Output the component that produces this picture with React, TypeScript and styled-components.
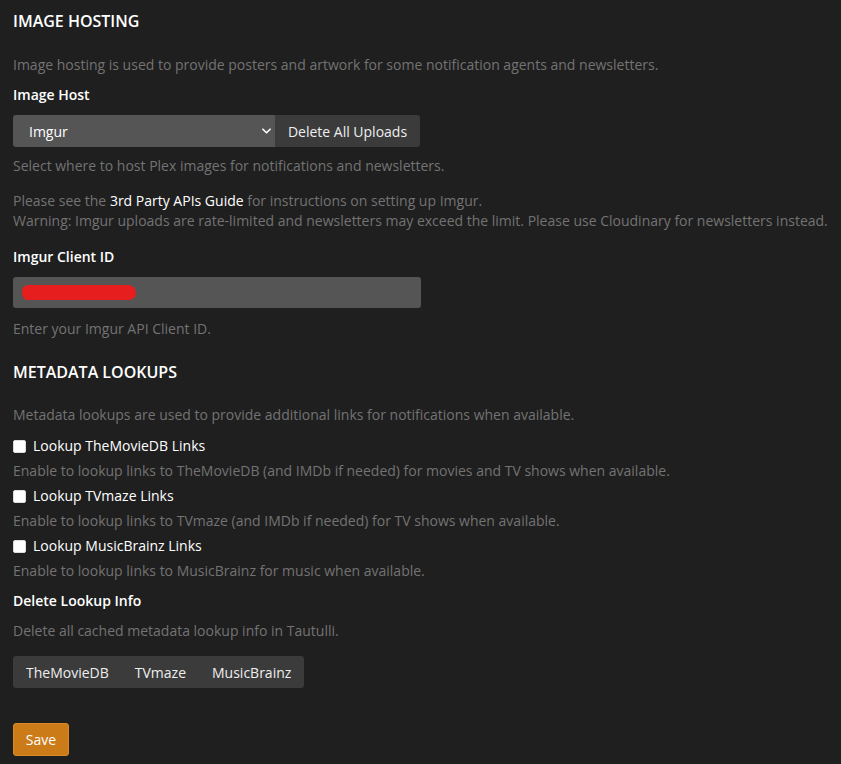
import React from 'react';
import styled, { createGlobalStyle } from 'styled-components';

const colors = {
  bg: '#1f1f1f',
  text: '#eeeeee',
  muted: '#737373',
  field: '#555555',
  button: '#3b3b3b',
  orange: '#cc7b19',
  orangeBorder: '#d98a26',
  redact: '#e61e1e',
};

const GlobalStyle = createGlobalStyle`
  html, body {
    margin: 0;
    padding: 0;
    background: ${colors.bg};
  }
  body {
    font-family: 'Open Sans', 'Noto Sans', sans-serif;
    font-size: 14px;
    line-height: 20px;
    color: ${colors.text};
  }
  * {
    box-sizing: border-box;
  }
`;

const lookups = [
  {
    name: 'TheMovieDB',
    help: 'Enable to lookup links to TheMovieDB (and IMDb if needed) for movies and TV shows when available.',
  },
  {
    name: 'TVmaze',
    help: 'Enable to lookup links to TVmaze (and IMDb if needed) for TV shows when available.',
  },
  {
    name: 'MusicBrainz',
    help: 'Enable to lookup links to MusicBrainz for music when available.',
  },
];

export default function App() {
  return (
    <>
      <GlobalStyle />
      <Page>
        <SectionHeader>Image Hosting</SectionHeader>
        <Intro>Image hosting is used to provide posters and artwork for some notification agents and newsletters.</Intro>

        <Label>Image Host</Label>
        <InputRow>
          <SelectWrap>
            <Select defaultValue="imgur">
              <option value="imgur">Imgur</option>
              <option value="cloudinary">Cloudinary</option>
            </Select>
            <Chevron viewBox="0 0 10 6" aria-hidden>
              <path d="M1 1l4 4 4-4" fill="none" stroke="#fff" strokeWidth="1.8" strokeLinecap="round" strokeLinejoin="round" />
            </Chevron>
          </SelectWrap>
          <AddonButton>Delete All Uploads</AddonButton>
        </InputRow>
        <HelpText $gap={9}>Select where to host Plex images for notifications and newsletters.</HelpText>
        <HelpText $gap={15}>
          Please see the <GuideLink href="#">3rd Party APIs Guide</GuideLink> for instructions on setting up Imgur.
          <br />
          Warning: Imgur uploads are rate-limited and newsletters may exceed the limit. Please use Cloudinary for
          newsletters instead.
        </HelpText>

        <Label $gap={16}>Imgur Client ID</Label>
        <TextField>
          <Redaction />
        </TextField>
        <HelpText $gap={11}>Enter your Imgur API Client ID.</HelpText>

        <SectionHeader $gap={22}>Metadata Lookups</SectionHeader>
        <Intro $gap={22}>Metadata lookups are used to provide additional links for notifications when available.</Intro>

        <LookupList>
          {lookups.map((l) => (
            <div key={l.name}>
              <CheckLabel>
                <Checkbox type="checkbox" />
                Lookup {l.name} Links
              </CheckLabel>
              <CheckHelp>{l.help}</CheckHelp>
            </div>
          ))}
        </LookupList>

        <Label>Delete Lookup Info</Label>
        <HelpText>Delete all cached metadata lookup info in Tautulli.</HelpText>
        <ButtonGroup>
          {lookups.map((l) => (
            <GroupButton key={l.name}>{l.name}</GroupButton>
          ))}
        </ButtonGroup>

        <SaveButton>Save</SaveButton>
      </Page>
    </>
  );
}

const Page = styled.div`
  display: flex;
  flex-direction: column;
  align-items: flex-start;
  padding: 10px 13px 8px;
`;

const SectionHeader = styled.h3<{ $gap?: number }>`
  margin: ${(p) => p.$gap ?? 0}px 0 0;
  font-size: 16px;
  line-height: 22px;
  font-weight: 600;
  text-transform: uppercase;
  color: #ffffff;
`;

const Intro = styled.p<{ $gap?: number }>`
  margin: ${(p) => p.$gap ?? 23}px 0 0;
  color: ${colors.muted};
`;

const Label = styled.label<{ $gap?: number }>`
  display: block;
  margin-top: ${(p) => p.$gap ?? 10}px;
  font-weight: 600;
  color: #ffffff;
`;

const InputRow = styled.div`
  display: flex;
  margin-top: 10px;
  height: 32px;
`;

const SelectWrap = styled.div`
  position: relative;
  width: 262px;
  height: 100%;
`;

const Select = styled.select`
  appearance: none;
  width: 100%;
  height: 100%;
  border: none;
  border-radius: 3px 0 0 3px;
  background: ${colors.field};
  color: #ffffff;
  font-family: inherit;
  font-size: 14px;
  font-weight: 400;
  padding: 0 16px;
  outline: none;
`;

const Chevron = styled.svg`
  position: absolute;
  right: 4px;
  top: 13px;
  width: 9px;
  height: 6px;
  pointer-events: none;
`;

const AddonButton = styled.button`
  height: 100%;
  width: 145px;
  border: none;
  border-radius: 0 3px 3px 0;
  background: ${colors.button};
  color: ${colors.text};
  font-family: inherit;
  font-size: 14px;
  font-weight: 400;
  white-space: nowrap;
  padding: 0 12px;
`;

const HelpText = styled.p<{ $gap?: number }>`
  margin: ${(p) => p.$gap ?? 10}px 0 0;
  color: ${colors.muted};
`;

const GuideLink = styled.a`
  color: #ffffff;
  font-weight: 500;
  text-decoration: none;
`;

const TextField = styled.div`
  display: flex;
  align-items: center;
  margin-top: 10px;
  width: 408px;
  height: 31px;
  border-radius: 3px;
  background: ${colors.field};
  padding-left: 9px;
`;

const Redaction = styled.span`
  display: block;
  width: 114px;
  height: 15px;
  border-radius: 8px 10px 9px 8px;
  background: ${colors.redact};
`;

const LookupList = styled.div`
  display: flex;
  flex-direction: column;
  gap: 5px;
  margin-top: 11px;
`;

const CheckLabel = styled.label`
  display: flex;
  align-items: center;
  gap: 7px;
  font-weight: 400;
  color: #ffffff;
`;

const Checkbox = styled.input`
  appearance: none;
  margin: 0;
  width: 13px;
  height: 13px;
  border-radius: 2px;
  background: #ffffff;
  border: 1px solid #dcdcdc;
`;

const CheckHelp = styled.p`
  margin: 5px 0 0;
  color: ${colors.muted};
`;

const ButtonGroup = styled.div`
  display: flex;
  margin-top: 15px;
  height: 32px;
  border-radius: 3px;
  background: ${colors.button};
  overflow: hidden;
`;

const GroupButton = styled.button`
  border: none;
  background: transparent;
  color: ${colors.text};
  font-family: inherit;
  font-size: 14px;
  font-weight: 400;
  padding: 0 13px;
`;

const SaveButton = styled.button`
  margin-top: 35px;
  height: 33px;
  width: 56px;
  border: 1px solid ${colors.orangeBorder};
  border-radius: 3px;
  background: ${colors.orange};
  color: #ffffff;
  font-family: inherit;
  font-size: 14px;
  font-weight: 400;
`;
